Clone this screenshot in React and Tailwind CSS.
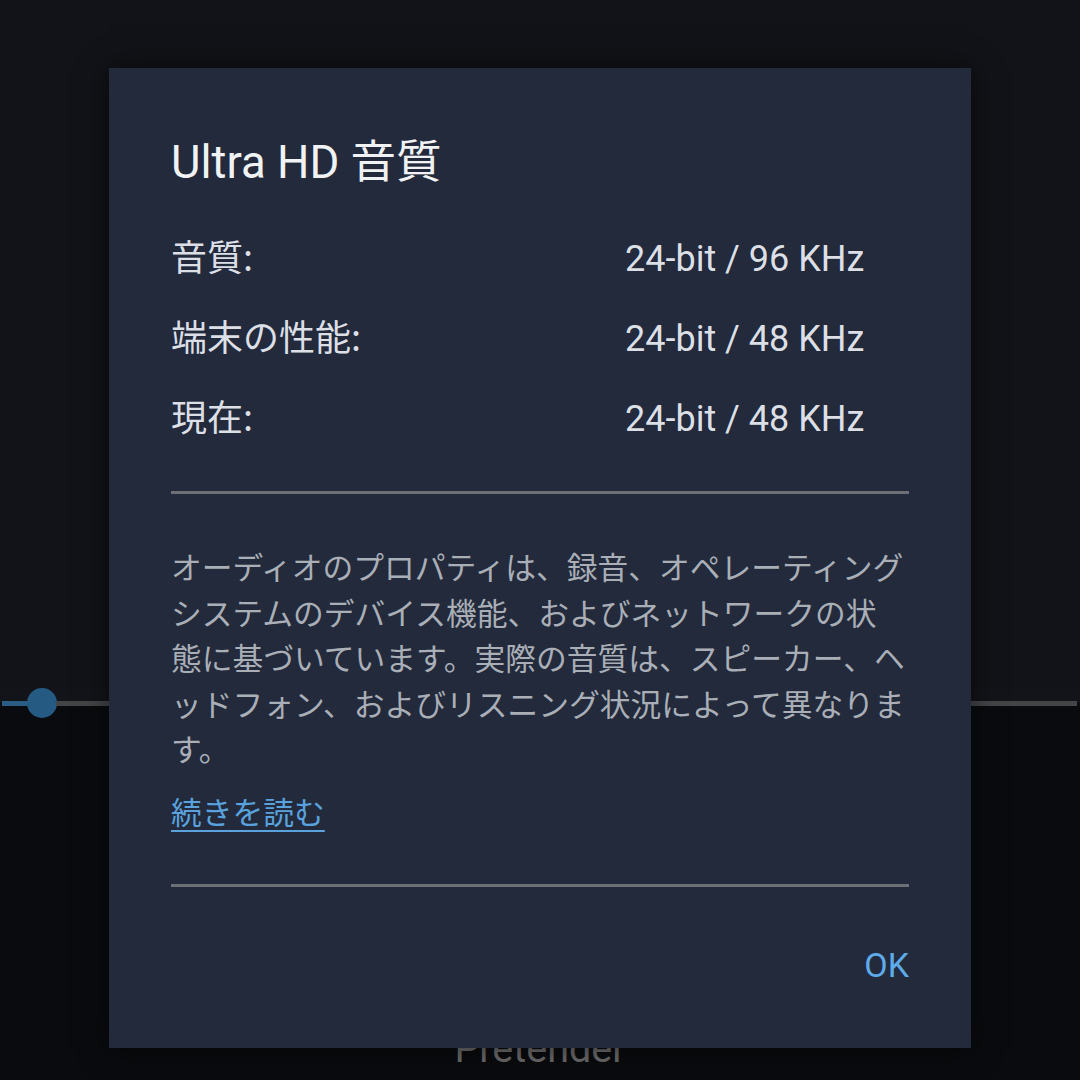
import React from 'react';

const latin = "font-['Roboto','Noto_Sans_CJK_JP',sans-serif]";
const cjk = "font-['Noto_Sans_CJK_JP','Roboto',sans-serif]";

const rows = [
  ['音質:', '24-bit / 96 KHz'],
  ['端末の性能:', '24-bit / 48 KHz'],
  ['現在:', '24-bit / 48 KHz'],
];

const lines = [
  'オーディオのプロパティは、録音、オペレーティング',
  'システムのデバイス機能、およびネットワークの状',
  '態に基づいています。実際の音質は、スピーカー、ヘ',
  'ッドフォン、およびリスニング状況によって異なりま',
  'す。',
];

function PlayerBackdrop() {
  return (
    <div className="flex flex-col h-full">
      <div className="h-[688px] bg-[#121318]" />
      {/* seek bar */}
      <div className="h-[30px] flex items-center pl-[2px] pr-[3px] bg-[linear-gradient(#131419_50%,#0a0b0e_50%)]">
        <div className="w-[26px] h-[5px] bg-[#2a5d84]" />
        <div className="w-[30px] h-[30px] rounded-full bg-[#255b83] -mx-px" />
        <div className="flex-1 h-[5px] bg-[#444547]" />
      </div>
      <div className="flex-1 bg-[#0a0b0e] pt-[307px] text-center">
        <p className={`${latin} text-[39.5px] leading-[48px] text-[#6a6a6a]`}>Pretender</p>
      </div>
    </div>
  );
}

export default function App() {
  return (
    <div className="relative w-[1080px] h-[1080px] overflow-hidden bg-[#0a0b0e]">
      <PlayerBackdrop />

      {/* Ultra HD dialog */}
      <div className="absolute left-[109px] top-[68px] w-[862px] h-[980px] bg-[#222a3b] px-[62px] pt-[67px] shadow-[0_0_28px_rgba(0,0,0,0.55)]">
        <h2 className={`${latin} text-[45.5px] leading-[56px] text-[#f1f2f4]`}>Ultra HD 音質</h2>

        <div className="mt-[24px]">
          {rows.map(([label, value]) => (
            <div key={label} className="flex items-baseline h-[80px] text-[36px] leading-[80px] text-[#dcdfe5]">
              <span className={`${cjk} w-[454px]`}>{label}</span>
              <span className={latin}>{value}</span>
            </div>
          ))}
        </div>

        <div className="mt-[36px] h-[3px] bg-[#6c6f76]" />

        <div className={`${cjk} mt-[49px] text-[30.75px] leading-[45.5px] text-[#a9aeb7]`}>
          {lines.map((l) => (
            <p key={l} className="whitespace-nowrap">{l}</p>
          ))}
        </div>

        <a href="#" className={`${cjk} block mt-[17px] w-max text-[30.75px] leading-[45.5px] text-[#5aa2de] underline underline-offset-[6px] decoration-2`}>
          続きを読む
        </a>

        <div className="mt-[51px] h-[3px] bg-[#6c6f76]" />

        <div className="flex justify-end mt-[58px]">
          <button className={`${latin} text-[34px] leading-[40px] text-[#5eaaea]`}>OK</button>
        </div>
      </div>
    </div>
  );
}
